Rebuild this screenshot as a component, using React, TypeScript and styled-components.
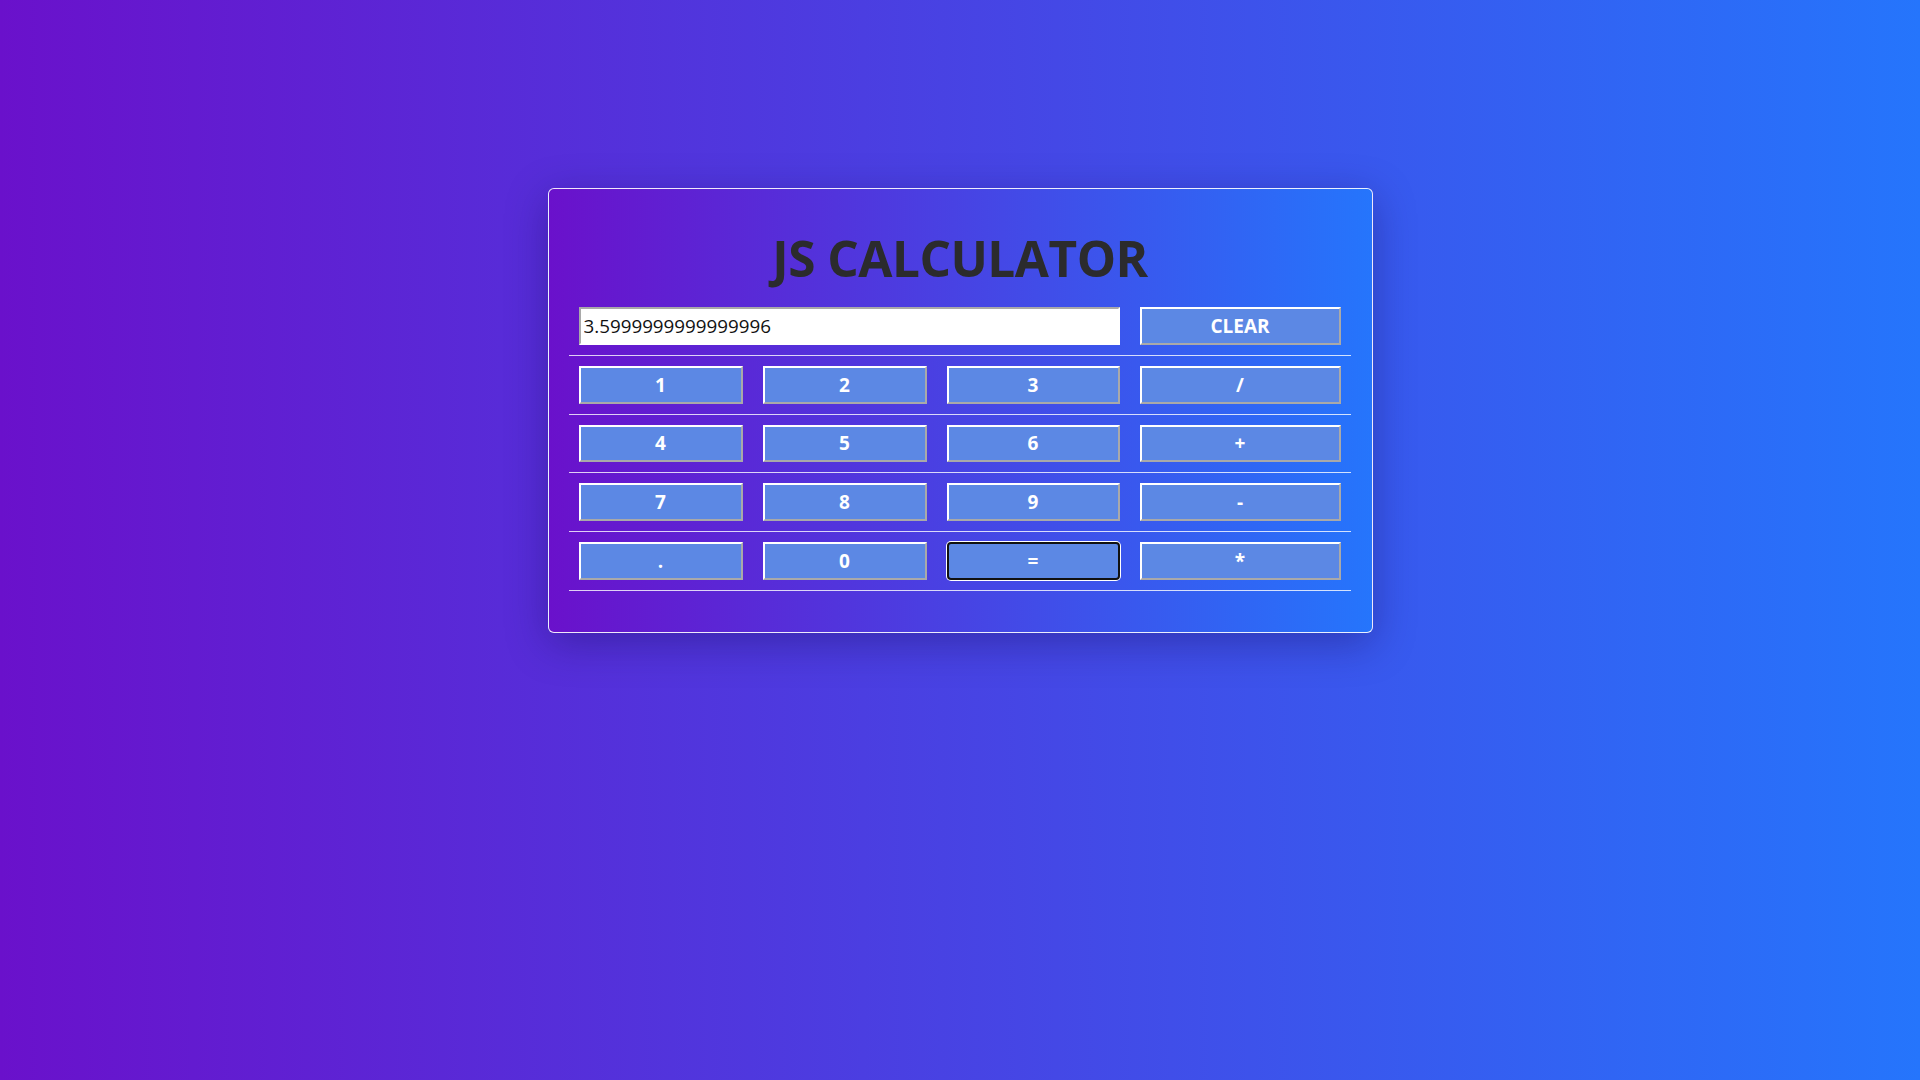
import React from "react";
import styled, { createGlobalStyle } from "styled-components";

const GlobalStyle = createGlobalStyle`
  html, body {
    margin: 0;
    padding: 0;
  }
  body {
    min-height: 100vh;
    background: linear-gradient(to right, #6a11cb 0%, #2575fc 100%);
    font-family: "Open Sans", "Noto Sans", sans-serif;
  }
`;

const Page = styled.div`
  display: flex;
  justify-content: center;
  padding-top: 188px;
  min-height: 100vh;
  box-sizing: border-box;
`;

const Card = styled.div`
  width: 825px;
  height: 445px;
  box-sizing: border-box;
  border: 1px solid rgba(255, 255, 255, 0.9);
  border-radius: 6px;
  background: linear-gradient(to right, #6a11cb 0%, #2575fc 100%);
  box-shadow: 0 10px 40px rgba(20, 10, 80, 0.35);
  padding: 0 20px;
  display: flex;
  flex-direction: column;
`;

const Title = styled.h1`
  margin: 35px 0 5px;
  text-align: center;
  font-family: "Open Sans", "Noto Sans", sans-serif;
  font-weight: 700;
  font-size: 49.5px;
  line-height: 68px;
  color: #2b2b2d;
  letter-spacing: -0.5px;
`;

const Row = styled.div`
  display: grid;
  grid-template-columns: 164px 164px 173px 201px;
  column-gap: 20px;
  padding: 10px 10px;
  border-bottom: 1px solid rgba(255, 255, 255, 0.8);
  width: 782px;
  box-sizing: border-box;
`;

const Display = styled.input`
  grid-column: span 3;
  height: 37.8px;
  box-sizing: border-box;
  border-width: 2px;
  border-style: solid;
  border-color: #a9a9a9 #ffffff #ffffff #a9a9a9;
  background: #ffffff;
  padding: 0 3px;
  font-family: "Open Sans", "Noto Sans", sans-serif;
  font-size: 18.8px;
  color: #111;
  outline: none;
`;

const Key = styled.button<{ $focused?: boolean }>`
  height: 37.8px;
  box-sizing: border-box;
  background: #5c88e4;
  color: #ffffff;
  font-family: "Open Sans", "Noto Sans", sans-serif;
  font-weight: 700;
  font-size: 19px;
  padding: 0;
  cursor: pointer;
  border-width: 2px;
  border-style: solid;
  border-color: ${(p) => (p.$focused ? "#111" : "#ffffff #a9a9a9 #a9a9a9 #ffffff")};
  border-radius: ${(p) => (p.$focused ? "4px" : "0")};
  box-shadow: ${(p) => (p.$focused ? "0 0 0 1px #ffffff" : "none")};
  outline: none;
`;

const rows: string[][] = [
  ["1", "2", "3", "/"],
  ["4", "5", "6", "+"],
  ["7", "8", "9", "-"],
  [".", "0", "=", "*"],
];

export default function App() {
  return (
    <>
      <GlobalStyle />
      <Page>
        <Card>
          <Title>JS CALCULATOR</Title>
          <div>
            <Row>
              <Display type="text" readOnly value="3.5999999999999996" />
              <Key>CLEAR</Key>
            </Row>
            {rows.map((r, i) => (
              <Row key={i}>
                {r.map((k) => (
                  <Key key={k} $focused={k === "="}>
                    {k}
                  </Key>
                ))}
              </Row>
            ))}
          </div>
        </Card>
      </Page>
    </>
  );
}
